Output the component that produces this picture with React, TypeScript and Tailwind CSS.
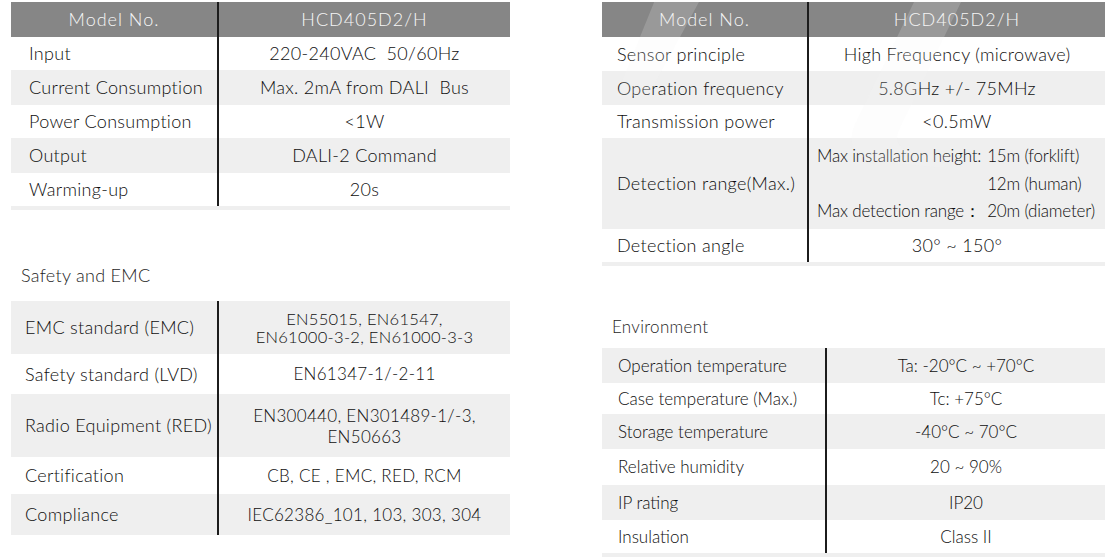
import React from 'react';

type Row = {
  label: React.ReactNode;
  value: React.ReactNode;
  h: string;
  gray?: boolean;
};

interface SpecTableProps {
  rows: Row[];
  header?: boolean;
  labelW: string;
  labelPad: string;
  strip?: boolean;
}

function SpecTable({ rows, header, labelW, labelPad, strip }: SpecTableProps) {
  return (
    <div className="flex flex-col">
      {header && (
        <div className="flex h-[35px] bg-[#868686] text-[#f6f6f6] text-[18px] tracking-[1px]">
          <div className={`${labelW} flex items-center justify-center border-r-2 border-[#1c1c1c]`}>Model No.</div>
          <div className="flex-1 flex items-center justify-center">HCD405D2/H</div>
        </div>
      )}
      {rows.map((r, i) => (
        <div key={i} className={`flex ${r.h} ${r.gray ? 'bg-[#efefef]' : 'bg-white'}`}>
          <div className={`${labelW} ${labelPad} flex items-center whitespace-nowrap border-r-2 border-[#1c1c1c]`}>{r.label}</div>
          <div className="flex-1 flex items-center justify-center text-center whitespace-pre">{r.value}</div>
        </div>
      ))}
      {strip && <div className="h-[4px] bg-[#efefef]" />}
    </div>
  );
}

const general: Row[] = [
  { label: 'Input', value: '220-240VAC  50/60Hz', h: 'h-[33px]' },
  { label: 'Current Consumption', value: 'Max. 2mA from DALI  Bus', h: 'h-[35px]', gray: true },
  { label: 'Power Consumption', value: '<1W', h: 'h-[33px]' },
  { label: 'Output', value: 'DALI-2 Command', h: 'h-[35px]', gray: true },
  { label: 'Warming-up', value: '20s', h: 'h-[33px]' },
];

const safety: Row[] = [
  {
    label: 'EMC standard (EMC)',
    value: <span className="text-[16.5px] leading-[18px]">EN55015, EN61547,<br />EN61000-3-2, EN61000-3-3</span>,
    h: 'h-[53px]',
    gray: true,
  },
  { label: 'Safety standard (LVD)', value: <span className="text-[17px]">EN61347-1/-2-11</span>, h: 'h-[40px]' },
  {
    label: 'Radio Equipment (RED)',
    value: <span className="text-[17px] leading-[21px]">EN300440, EN301489-1/-3,<br />EN50663</span>,
    h: 'h-[63px]',
    gray: true,
  },
  { label: 'Certification', value: <span className="text-[17px]">CB, CE , EMC, RED, RCM</span>, h: 'h-[37px]' },
  { label: 'Compliance', value: <span className="text-[17px]">IEC62386_101, 103, 303, 304</span>, h: 'h-[41px]', gray: true },
];

const sensor: Row[] = [
  { label: 'Sensor principle', value: 'High Frequency (microwave)', h: 'h-[34px]' },
  { label: 'Operation frequency', value: '5.8GHz +/- 75MHz', h: 'h-[34px]', gray: true },
  { label: 'Transmission power', value: '<0.5mW', h: 'h-[33px]' },
  {
    label: 'Detection range(Max.)',
    value: (
      <div className="grid grid-cols-[auto_auto] gap-x-[6px] text-left text-[17px] leading-[27.5px] tracking-[-0.2px] -ml-[2px]">
        <span>Max installation height:</span>
        <span>15m (forklift)</span>
        <span />
        <span>12m (human)</span>
        <span>Max detection range：</span>
        <span>20m (diameter)</span>
      </div>
    ),
    h: 'h-[91px]',
    gray: true,
  },
  { label: 'Detection angle', value: '30° ~ 150°', h: 'h-[33px]' },
];

const environment: Row[] = [
  { label: 'Operation temperature', value: 'Ta: -20°C ~ +70°C', h: 'h-[35px]', gray: true },
  { label: 'Case temperature (Max.)', value: 'Tc: +75°C', h: 'h-[31px]' },
  { label: 'Storage temperature', value: '-40°C ~ 70°C', h: 'h-[35px]', gray: true },
  { label: 'Relative humidity', value: '20 ~ 90%', h: 'h-[36px]' },
  { label: 'IP rating', value: 'IP20', h: 'h-[35px]', gray: true },
  { label: 'Insulation', value: 'Class II', h: 'h-[33px]' },
];

export default function App() {
  return (
    <div
      className="relative w-[1107px] h-[560px] bg-white overflow-hidden text-[#0e0e0e] text-[18px] font-light tracking-[0.3px] flex"
      style={{ fontFamily: 'Lato, "Open Sans", sans-serif' }}
    >
      <div className="w-[499px] ml-[11px] pt-[2px] flex flex-col">
        <SpecTable rows={general} header labelW="w-[208px]" labelPad="pl-[18px]" strip />
        <div className="mt-[53px] mb-[14px] h-[24px] leading-[24px] pl-[10px] text-[18px] text-[#1e1e1e]">Safety and EMC</div>
        <SpecTable rows={safety} labelW="w-[208px]" labelPad="pl-[14px]" />
      </div>

      <div className="w-[503px] ml-[92px] pt-[2px] flex flex-col">
        <SpecTable rows={sensor} header labelW="w-[207px]" labelPad="pl-[15px]" strip />
        <div className="mt-[49px] mb-[9px] h-[24px] leading-[24px] pl-[10px] text-[17px] text-[#1e1e1e]">Environment</div>
        <div className="text-[17px] tracking-[0px]">
          <SpecTable rows={environment} labelW="w-[225px]" labelPad="pl-[16px]" strip />
        </div>
      </div>

      <svg className="absolute left-0 top-0 pointer-events-none" width="1107" height="560" viewBox="0 0 1107 560">
        <g fill="#f2f2f2" opacity="0.18">
          <path d="M655 0 L700 0 L648 96 L616 96 Z" />
          <path d="M915 0 L962 0 L900 128 C893 142 900 150 915 152 L950 156 L944 168 L880 162 C852 158 846 142 856 122 Z" />
        </g>
      </svg>
    </div>
  );
}
